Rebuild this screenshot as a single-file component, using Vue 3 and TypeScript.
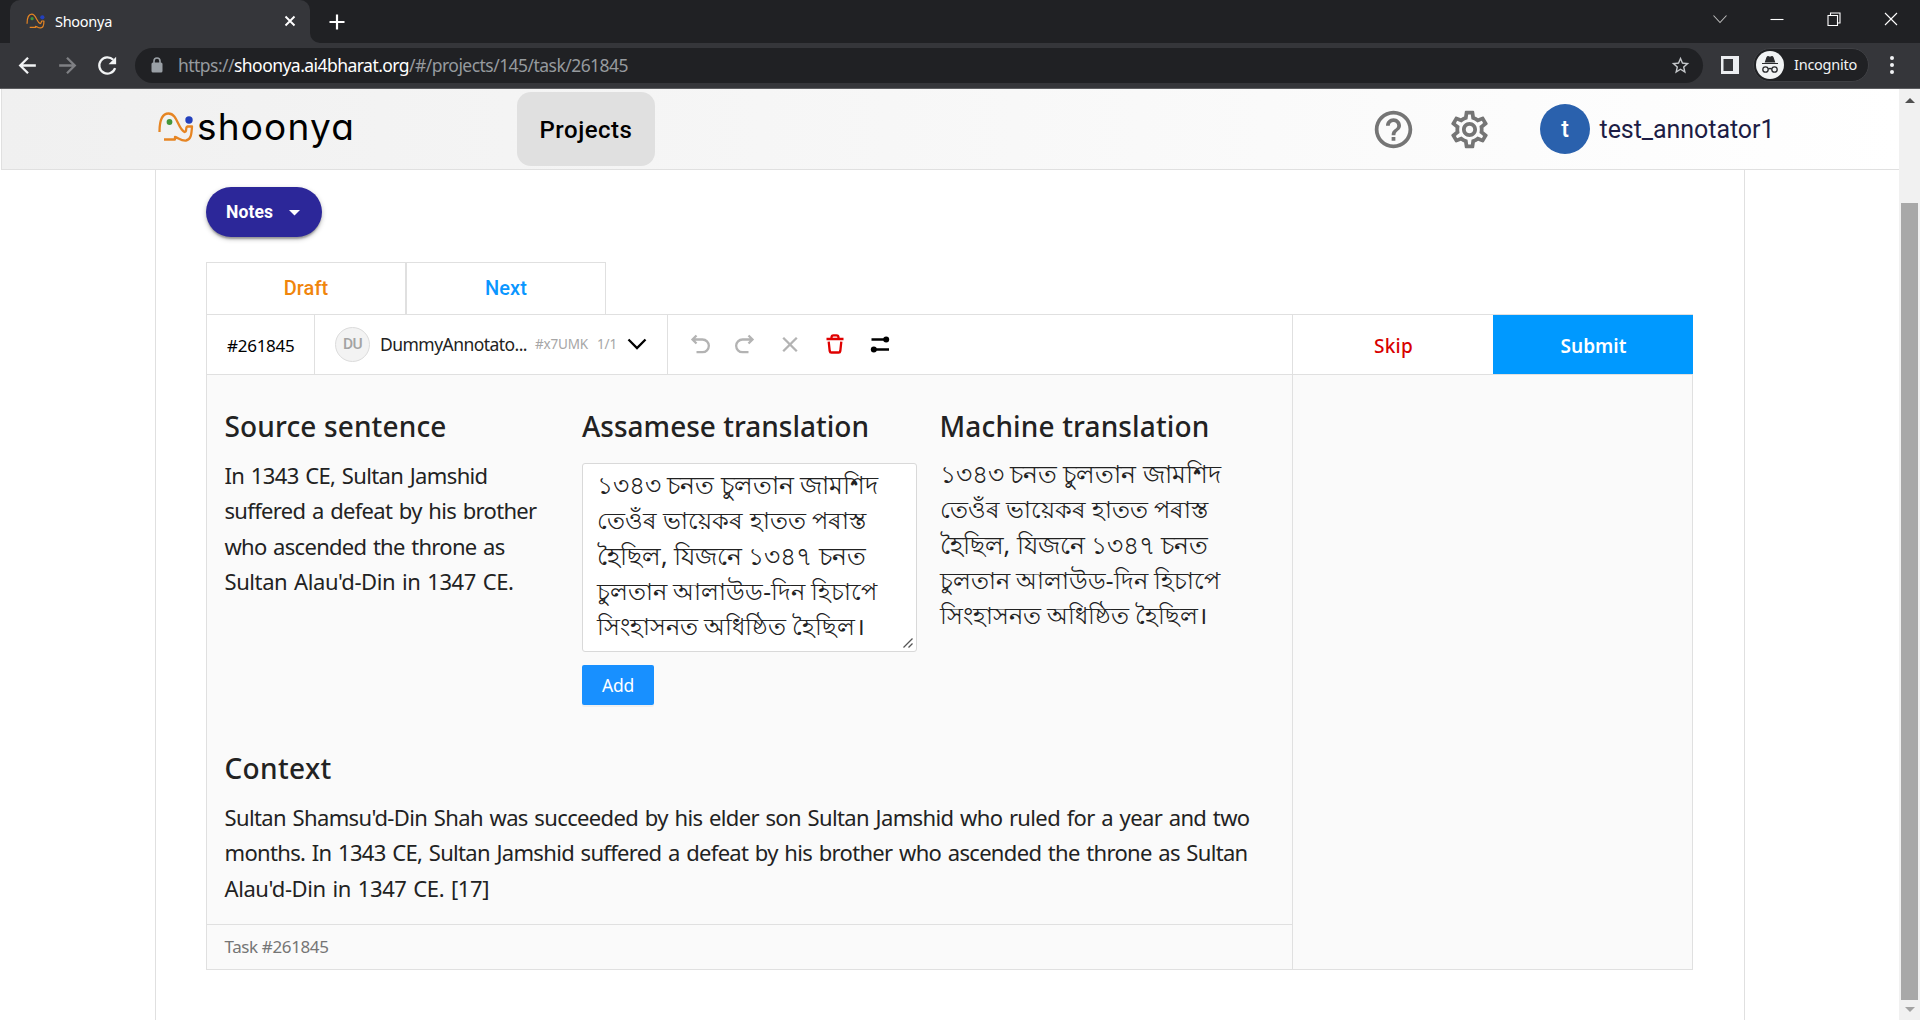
<script setup lang="ts">
import { nextTick } from 'vue'
import type { Directive } from 'vue'

// Tracks a single line of text so that it occupies the given advance width.
const vFit: Directive<HTMLElement, number> = {
  mounted(el, binding) {
    nextTick(() => {
      const natural = el.getBoundingClientRect().width
      const count = Array.from(el.textContent ?? '').length
      if (natural && count) el.style.letterSpacing = `${(binding.value - natural) / count}px`
    })
  },
}

// Sizes a line of Indic text to its width, since clusters must not be tracked apart.
const vScale: Directive<HTMLElement, number> = {
  mounted(el, binding) {
    nextTick(() => {
      const natural = el.getBoundingClientRect().width
      const size = parseFloat(getComputedStyle(el).fontSize)
      if (natural) el.style.fontSize = `${(size * binding.value) / natural}px`
    })
  },
}

interface Line {
  text: string
  width: number
}

const source: Line[] = [
  { text: 'In 1343 CE, Sultan Jamshid', width: 263 },
  { text: 'suffered a defeat by his brother', width: 312 },
  { text: 'who ascended the throne as', width: 280 },
  { text: "Sultan Alau'd-Din in 1347 CE.", width: 289 },
]
const translation: Line[] = [
  { text: '১৩৪৩ চনত চুলতান জামশিদ', width: 281.5 },
  { text: 'তেওঁৰ ভায়েকৰ হাতত পৰাস্ত', width: 267 },
  { text: 'হৈছিল, যিজনে ১৩৪৭ চনত', width: 266 },
  { text: 'চুলতান আলাউড-দিন হিচাপে', width: 277.5 },
  { text: 'সিংহাসনত অধিষ্ঠিত হৈছিল।', width: 266 },
]
const context: Line[] = [
  { text: "Sultan Shamsu'd-Din Shah was succeeded by his elder son Sultan Jamshid who ruled for a year and two", width: 1025 },
  { text: 'months. In 1343 CE, Sultan Jamshid suffered a defeat by his brother who ascended the throne as Sultan', width: 1023 },
  { text: "Alau'd-Din in 1347 CE. [17]", width: 264.5 },
]
</script>

<template>
  <div class="screen">
    <div class="tabstrip">
      <div class="tab">
        <svg class="favicon" viewBox="0 0 36 30"><path class="trunk" d="M2 20C2 9 5 2 11 2c8 0 9 15 16 18 2 0 2-5 3-5h4c0 8-1 13-6 13-5 1-7-3-10-3v2H7" /><circle cx="11.500" cy="10.500" r="3" fill="#43963a" /><circle cx="31" cy="8" r="4" fill="#2340bd" /></svg>
        <span class="tab-title" v-fit="57">Shoonya</span>
        <svg class="tab-close" viewBox="0 0 12 12"><path d="M1.500 1.500l9 9m0-9l-9 9" /></svg>
      </div>
      <svg class="tab-flare" viewBox="0 0 10 10"><path d="M0 0v10h10A10 10 0 0 1 0 0" fill="#35363a" /></svg>
      <svg class="new-tab" viewBox="0 0 16 16"><path d="M8 .5v15M.5 8h15" /></svg>
      <div class="window-buttons">
        <svg viewBox="0 0 14 14"><path d="M.5 3.500L7 10.500l6.500-7" stroke="#bbb" /></svg>
        <svg viewBox="0 0 14 14"><path d="M.5 7.500h13" /></svg>
        <svg viewBox="0 0 14 14"><path d="M1 3.500h9.500v10H1zM3.500 3V1H13v10h-2" /></svg>
        <svg viewBox="0 0 14 14"><path d="M1 1l12 12M13 1L1 13" /></svg>
      </div>
    </div>

    <div class="toolbar">
      <svg class="nav" viewBox="0 0 24 24"><path d="M20 12H5m7.500-7.500L5 12l7.500 7.500" /></svg>
      <svg class="nav dim" viewBox="0 0 24 24"><path d="M4 12h15m-7.500-7.500L19 12l-7.500 7.500" /></svg>
      <svg class="nav" viewBox="0 0 24 24"><path d="M19.300 14.500A7.800 7.800 0 1 1 17.500 6.500" /><path d="M20.300 3.500v7.300H13z" fill="#f1f3f4" stroke="none" /></svg>
      <div class="address">
        <svg class="lock" viewBox="0 0 12 16"><rect x=".5" y="5.500" width="11" height="10" rx="1.500" fill="#9aa0a6" /><path d="M3 6V4a3 3 0 0 1 6 0v2" fill="none" stroke="#9aa0a6" stroke-width="1.600" /></svg>
        <span class="url" v-fit="450">https://<b>shoonya.ai4bharat.org</b>/#/projects/145/task/261845</span>
        <svg class="star" viewBox="0 0 24 24"><path d="M22 9.240l-7.190-.62L12 2 9.190 8.630 2 9.240l5.460 4.730L5.820 21 12 17.270 18.180 21l-1.630-7.030L22 9.240zM12 15.400l-3.760 2.270 1-4.280-3.320-2.880 4.380-.38L12 6.100l1.710 4.040 4.380.38-3.320 2.880 1 4.280L12 15.400z" fill="#c4c7ca" /></svg>
      </div>
      <svg class="side-panel" viewBox="0 0 18 18"><path d="M0 0h18v18H0zM2.500 3v12H12V3z" fill="#eceef1" fill-rule="evenodd" /></svg>
      <div class="incognito">
        <svg viewBox="0 0 28 28"><circle cx="14" cy="14" r="14" fill="#f1f3f4" /><path d="M6 12.500h16M9.500 11L11 6.500q.5-1 1.500-.7l1.500.5 1.500-.5q1-.3 1.500.7l1.500 4.500z" fill="#292a2d" stroke="#292a2d" stroke-width="1.200" /><g fill="none" stroke="#292a2d" stroke-width="1.300"><circle cx="9.500" cy="18.500" r="2.700" /><circle cx="18.500" cy="18.500" r="2.700" /><path d="M12.200 18q1.800-1 3.600 0" /></g></svg>
        <span v-fit="63">Incognito</span>
      </div>
      <svg class="dots" viewBox="0 0 4 18"><circle cx="2" cy="2" r="2" /><circle cx="2" cy="9" r="2" /><circle cx="2" cy="16" r="2" /></svg>
    </div>

    <div class="viewport">
      <div class="page">
        <header class="header">
          <div class="logo">
            <svg viewBox="0 0 36 30"><path class="trunk" d="M1.500 20C1.500 8 5 1.500 10.500 1.500c9 0 9 15 16 18.500 3 0 .5-5 3-5.500h4.500c-.5 8-1 13-6 14-5 .5-8-3-11-3.500v2.500H6" /><circle cx="11.500" cy="10" r="2.900" fill="#43963a" /><circle cx="31" cy="8" r="3.700" fill="#2340bd" /></svg>
            <span class="wordmark"><span v-fit="158">shoonya</span></span>
          </div>
          <nav class="projects"><span v-fit="93">Projects</span></nav>
          <svg class="action help" viewBox="0 0 24 24"><path d="M11 18h2v-2h-2v2zm1-16C6.480 2 2 6.480 2 12s4.480 10 10 10 10-4.480 10-10S17.520 2 12 2zm0 18c-4.410 0-8-3.590-8-8s3.590-8 8-8 8 3.590 8 8-3.590 8-8 8zm0-14c-2.210 0-4 1.790-4 4h2c0-1.100.9-2 2-2s2 .9 2 2c0 2-3 1.750-3 5h2c0-2.250 3-2.500 3-5 0-2.210-1.790-4-4-4z" /></svg>
          <svg class="action gear" viewBox="0 0 24 24"><path d="M19.430 12.980c.04-.32.07-.64.07-.98 0-.34-.03-.66-.07-.98l2.110-1.650c.19-.15.24-.42.12-.64l-2-3.460c-.09-.16-.26-.25-.44-.25-.06 0-.12.010-.17.030l-2.490 1c-.52-.4-1.080-.73-1.690-.98l-.38-2.650C14.460 2.180 14.250 2 14 2h-4c-.25 0-.46.18-.49.42l-.38 2.650c-.61.25-1.170.59-1.690.98l-2.490-1c-.06-.02-.12-.03-.18-.03-.17 0-.34.09-.43.25l-2 3.460c-.13.22-.07.49.12.64l2.110 1.650c-.04.32-.07.65-.07.98 0 .33.03.66.07.98l-2.110 1.650c-.19.15-.24.42-.12.64l2 3.460c.09.16.26.25.44.25.06 0 .12-.01.17-.03l2.490-1c.52.4 1.080.73 1.690.98l.38 2.650c.03.24.24.42.49.42h4c.25 0 .46-.18.49-.42l.38-2.650c.61-.25 1.170-.59 1.690-.98l2.490 1c.06.02.12.03.18.03.17 0 .34-.09.43-.25l2-3.460c.12-.22.07-.49-.12-.64l-2.110-1.650zm-1.980-1.710c.04.31.05.52.05.73 0 .21-.02.43-.05.73l-.14 1.130.89.7 1.080.84-.7 1.210-1.270-.51-1.040-.42-.9.68c-.43.32-.84.56-1.250.73l-1.060.43-.16 1.130-.2 1.350h-1.400l-.19-1.350-.16-1.130-1.060-.43c-.43-.18-.83-.41-1.230-.71l-.91-.7-1.060.43-1.270.51-.7-1.210 1.080-.84.89-.7-.14-1.130c-.03-.31-.05-.54-.05-.74s.02-.43.05-.73l.14-1.130-.89-.7-1.080-.84.7-1.210 1.270.51 1.040.42.9-.68c.43-.32.84-.56 1.250-.73l1.060-.43.16-1.130.2-1.350h1.390l.19 1.350.16 1.130 1.060.43c.43.18.83.41 1.230.71l.91.7 1.060-.43 1.270-.51.7 1.210-1.070.85-.89.7.14 1.130zM12 8c-2.210 0-4 1.790-4 4s1.790 4 4 4 4-1.790 4-4-1.790-4-4-4zm0 6c-1.100 0-2-.9-2-2s.9-2 2-2 2 .9 2 2-.9 2-2 2z" /></svg>
          <div class="avatar">t</div>
          <span class="username" v-fit="175">test_annotator1</span>
        </header>

        <main class="sheet">
          <button class="notes"><span v-fit="47">Notes</span><svg viewBox="0 0 12 6"><path d="M0 0h12L6 6z" fill="#fff" /></svg></button>

          <div class="task-tabs">
            <div class="draft"><span v-fit="44.5">Draft</span></div>
            <div class="next"><span v-fit="42">Next</span></div>
          </div>

          <section class="editor">
            <div class="controls">
              <div class="task-id"><span v-fit="67.5">#261845</span></div>
              <div class="annotator">
                <div class="initials"><span v-fit="19">DU</span></div>
                <span class="name" v-fit="147">DummyAnnotato...</span>
                <span class="hash" v-fit="53">#x7UMK</span>
                <span class="count" v-fit="20">1/1</span>
                <svg viewBox="0 0 20 12"><path d="M1.500 1.500L10 10l8.500-8.500" /></svg>
              </div>
              <div class="tools">
                <svg viewBox="0 0 20 20"><path d="M6.500 1.500L2.500 5.500l4 4M3 5.500h9.500a6.300 6.300 0 0 1 0 12.700H6.500" /></svg>
                <svg viewBox="0 0 20 20"><path d="M13.500 1.500l4 4-4 4M17 5.500H7.500a6.300 6.300 0 0 0 0 12.700h6" /></svg>
                <svg viewBox="0 0 20 20"><path d="M3.200 3.700l13.600 13.600m0-13.600L3.200 17.300" /></svg>
                <svg class="trash" viewBox="0 0 20 20"><path d="M1.500 5h17M6.500 5V3.500Q6.500 1.300 8.500 1.300h3q2 0 2 2.200V5M3.700 7.700l1 9.300q.2 1.500 1.700 1.500h7.200q1.500 0 1.700-1.500l1-9.300" /></svg>
                <svg class="sliders" viewBox="0 0 20 20"><path d="M1.500 5.500h14M4 15.500h15" /><circle cx="16.200" cy="5.500" r="3" /><circle cx="3.800" cy="15.500" r="3" /></svg>
              </div>
              <div class="skip"><span v-fit="39">Skip</span></div>
              <div class="submit"><span v-fit="66">Submit</span></div>
            </div>

            <div class="body">
              <div class="main">
                <div class="columns">
                  <div class="column">
                    <h2><span v-fit="222">Source sentence</span></h2>
                    <p v-for="line in source" :key="line.text"><span v-fit="line.width">{{ line.text }}</span></p>
                  </div>
                  <div class="column">
                    <h2><span v-fit="287">Assamese translation</span></h2>
                    <div class="textarea indic">
                      <p v-for="line in translation" :key="line.text"><span v-scale="line.width">{{ line.text }}</span></p>
                      <svg class="grip" viewBox="0 0 10 10"><path d="M.5 9.500l9-9M5.500 9.500l4-4" /></svg>
                    </div>
                    <button class="add"><span v-fit="32">Add</span></button>
                  </div>
                  <div class="column">
                    <h2><span v-fit="270">Machine translation</span></h2>
                    <div class="indic">
                      <p v-for="line in translation" :key="line.text"><span v-scale="line.width">{{ line.text }}</span></p>
                    </div>
                  </div>
                </div>
                <div class="context">
                  <h2><span v-fit="107">Context</span></h2>
                  <p v-for="line in context" :key="line.text"><span v-fit="line.width">{{ line.text }}</span></p>
                </div>
                <footer><span v-fit="104">Task #261845</span></footer>
              </div>
              <aside></aside>
            </div>
          </section>
        </main>
      </div>
      <div class="scrollbar">
        <svg viewBox="0 0 10 5"><path d="M0 5l5-5 5 5z" fill="#505050" /></svg>
        <div class="thumb"></div>
        <svg viewBox="0 0 10 5"><path d="M0 0l5 5 5-5z" fill="#a3a3a3" /></svg>
      </div>
    </div>
  </div>
</template>

<style>
body { margin: 0; overflow: hidden; }
</style>

<style scoped>
* { box-sizing: border-box; }
svg { display: block; flex: none; }
span { display: inline-block; white-space: nowrap; }
button { border: 0; margin: 0; }
.screen { width: 1920px; height: 1020px; overflow: hidden; background: #fff; font-family: "Noto Sans", "Liberation Sans", sans-serif; display: flex; flex-direction: column; }
.trunk { fill: none; stroke: #e68523; stroke-width: 2.3; stroke-linejoin: round; }

.tabstrip { height: 43px; flex: none; background: #202124; display: flex; align-items: center; padding-left: 10px; }
.tab { width: 300px; height: 43px; border-radius: 10px 10px 0 0; background: #35363a; display: flex; align-items: center; padding: 0 14px 2px 16px; }
.favicon { width: 19px; height: 18px; }
.tab-title { color: #fff; font-size: 14.5px; margin-left: 10px; }
.tab-close { width: 12px; height: 12px; margin-left: auto; stroke: #fff; stroke-width: 1.9; }
.tab-flare { width: 10px; height: 10px; align-self: flex-end; }
.new-tab { width: 16px; height: 16px; margin-left: 9px; stroke: #fff; stroke-width: 2.2; }
.window-buttons { margin-left: auto; margin-right: 22px; margin-top: -6px; display: flex; gap: 43px; }
.window-buttons svg { width: 14px; height: 14px; fill: none; stroke: #fff; stroke-width: 1.1; }

.toolbar { height: 46px; flex: none; background: #35363a; border-bottom: 1px solid #5c5d60; display: flex; align-items: center; padding: 0 0 1px 15px; }
.nav { width: 25px; height: 25px; margin-right: 15px; fill: none; stroke: #f1f3f4; stroke-width: 2.2; }
.nav.dim { stroke: #7f8084; }
.address { width: 1568px; height: 35px; border-radius: 18px; background: #202124; display: flex; align-items: center; padding: 0 12px 0 16px; }
.lock { width: 12px; height: 16px; }
.url { color: #969a9e; font-size: 17.5px; margin-left: 15px; }
.url b { color: #fff; font-weight: 400; }
.star { width: 21px; height: 21px; margin-left: auto; }
.side-panel { width: 18px; height: 18px; margin-left: 18px; }
.incognito { width: 116px; height: 34px; margin-left: 14px; border: 1px solid #3f4044; border-radius: 17px; background: #202124; color: #f1f3f4; font-size: 14.5px; display: flex; align-items: center; padding-left: 2px; }
.incognito svg { width: 28px; height: 28px; margin-right: 10px; }
.incognito span { margin-top: -2px; }
.dots { width: 4px; height: 18px; margin-left: 21px; fill: #f1f3f4; }

.viewport { flex: 1; min-height: 0; display: flex; }
.page { width: 1899px; }
.header { height: 81px; margin-left: 1px; border: 1px solid #e0e0e0; border-top: 0; border-right: 0; background: linear-gradient(90deg, #f0f0f0, #fff); display: flex; align-items: center; font-family: Roboto, sans-serif; }
.logo { display: flex; width: 359px; margin-left: 156px; height: 34px; margin-top: -1px; }
.logo svg { width: 36px; height: 30px; }
.wordmark { font-family: Inter, sans-serif; font-size: 37px; line-height: 30px; font-feature-settings: "cv11"; margin-left: 3px; color: #000; }
.projects { width: 138px; height: 74px; border-radius: 14px; background: #e0e0e0; display: flex; align-items: center; justify-content: center; font-size: 24px; font-weight: 500; color: #000; padding-top: 1px; }
.action { width: 45px; height: 45px; fill: #757575; }
.help { margin-left: 715.5px; }
.gear { margin-left: 31px; }
.avatar { width: 50px; height: 50px; margin-left: 48.5px; border-radius: 50%; background: #2a61ad; color: #fff; font-size: 23px; font-weight: 500; display: flex; align-items: center; justify-content: center; }
.username { margin-left: 9.5px; font-size: 25px; color: #1d1d45; }

.sheet { width: 1590px; height: 851px; margin-left: 155px; border: 1px solid #e0e0e0; border-width: 0 1px; padding: 17px 0 0 50px; font-family: "Noto Sans", sans-serif; }
.notes { width: 116px; height: 50px; border-radius: 25px; background: #2c2799; color: #fff; font-family: Roboto, sans-serif; font-size: 17.5px; font-weight: 700; display: flex; align-items: center; padding: 0 0 0 20px; box-shadow: 0 3px 2px -1px #0004, 0 2px 5px #0004; }
.notes svg { width: 11px; height: 5.5px; margin: 2px 0 0 16px; }
.task-tabs { display: flex; margin-top: 25px; font-family: Roboto, sans-serif; font-size: 20px; font-weight: 500; }
.task-tabs div { width: 200px; height: 52px; border: 1px solid #e0e0e0; border-bottom: 0; display: flex; align-items: center; justify-content: center; padding-bottom: 2px; }
.draft { color: #f0850c; }
.next { color: #0a96ff; }
.editor { width: 1487px; height: 656px; border: 1px solid #e0e0e0; display: flex; flex-direction: column; }
.controls { height: 60px; flex: none; display: flex; border-bottom: 1px solid #e0e0e0; }
.controls > div { flex: none; }
.task-id { width: 108px; border-right: 1px solid #e0e0e0; font-size: 17px; display: flex; align-items: center; padding: 1px 0 0 20px; }
.annotator { width: 353px; border-right: 1px solid #e0e0e0; display: flex; align-items: center; padding: 0 0 1px 20px; }
.initials { width: 35px; height: 35px; border: 1px solid #dcdcdc; border-radius: 50%; background: #f3f3f3; color: #a3a3a3; font: 500 15.5px Roboto, sans-serif; display: flex; align-items: center; justify-content: center; padding-bottom: 1px; }
.name { font-size: 17.5px; margin-left: 10px; color: #222; }
.hash, .count { font-size: 13.5px; color: #a6a6a6; }
.hash { margin-left: 8px; }
.count { margin-left: 9px; }
.annotator svg { width: 20px; height: 12px; margin-left: 10px; fill: none; stroke: #000; stroke-width: 2.3; }
.tools { width: 625px; border-right: 1px solid #e0e0e0; display: flex; align-items: center; padding: 0 0 1px 22px; gap: 25px; }
.tools svg { width: 20px; height: 20px; fill: none; stroke: #b3b3b3; stroke-width: 2.3; }
.tools .trash { stroke: #e00000; }
.tools .sliders { stroke: #000; }
.tools .sliders circle { fill: #000; stroke: none; }
.skip, .submit { width: 200px; display: flex; align-items: center; justify-content: center; font-size: 19px; font-weight: 600; padding: 3px 0 0 1px; }
.skip { color: #d80000; font-weight: 500; }
.submit { height: 59px; margin-right: -1px; background: #0099ff; color: #fff; }
.body { flex: 1; display: flex; background: #fafafa; }
.main { width: 1086px; flex: none; border-right: 1px solid #e0e0e0; display: flex; flex-direction: column; }
aside { flex: 1; }
.columns { display: flex; height: 340px; padding-left: 17.5px; gap: 22.5px; }
.column { width: 335px; padding-top: 28px; }
h2 { margin: 0; height: 55px; font-size: 28px; line-height: 47px; font-weight: 500; color: #222; }
p { margin: 0; font-size: 22px; line-height: 35.36px; height: 35.36px; color: #222; word-spacing: 1.5px; }
.indic p { font-size: 25px; word-spacing: 0; position: relative; top: -2px; }
.indic span { line-height: 35.36px; }
.textarea { position: relative; height: 189px; margin-top: 5px; border: 1px solid #d9d9d9; border-radius: 3px; background: #fff; padding: 5px 14px; }
.grip { position: absolute; right: 3px; bottom: 3px; width: 10px; height: 10px; stroke: #555; stroke-width: 1.3; }
.add { width: 72px; height: 40px; margin-top: 13px; border-radius: 2px; background: #1890ff; color: #fff; font: 17.5px "Noto Sans", sans-serif; padding: 0; box-shadow: 0 2px 0 #0000000b; display: flex; align-items: center; justify-content: center; }
.context { flex: 1; padding: 30px 0 0 17.5px; }
footer { height: 45px; border-top: 1px solid #e0e0e0; padding: 0 0 2px 17.5px; display: flex; align-items: center; font-size: 17px; color: #757575; }

.scrollbar { width: 21px; background: #f1f1f1; display: flex; flex-direction: column; align-items: center; padding: 9px 0 8px; }
.scrollbar svg { width: 10px; height: 5px; }
.thumb { width: 17px; height: 797px; margin: 100px 0 7px; background: #a8a8a8; flex: none; }
</style>
